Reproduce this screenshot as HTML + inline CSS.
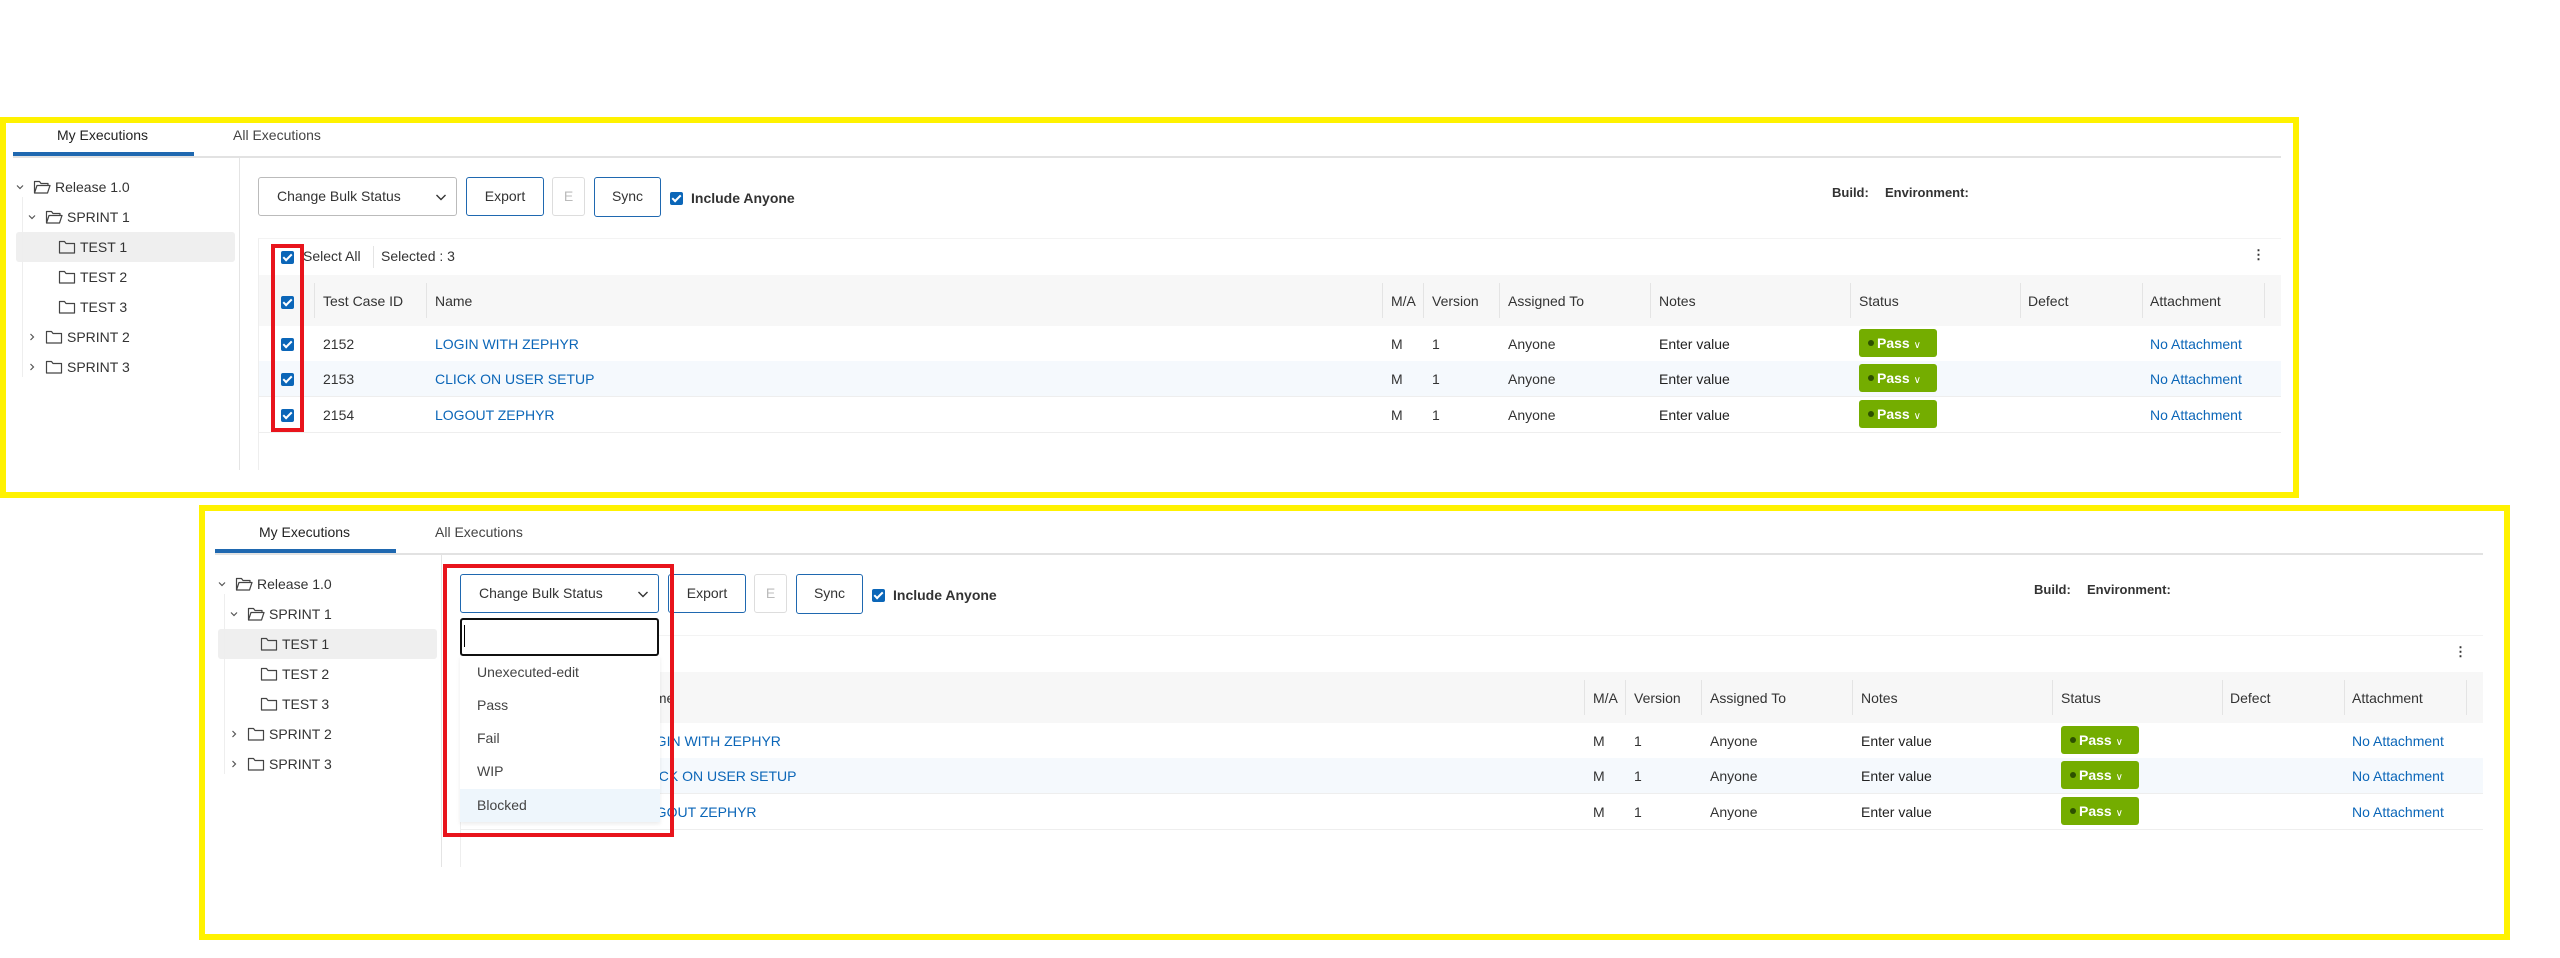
<!DOCTYPE html>
<html><head><meta charset="utf-8">
<style>
*{margin:0;padding:0;box-sizing:border-box}
body{width:2560px;height:958px;background:#fff;position:relative;overflow:hidden;font-family:"Liberation Sans",sans-serif;font-size:14px;color:#333}
.a{position:absolute;white-space:nowrap}
.yb{position:absolute;border:6px solid #fff200}
.rb{position:absolute;border:4px solid #e8141c}
.cb{position:absolute;width:13px;height:13px;background:#0b66b8;border-radius:2px}
.cb:after{content:"";position:absolute;left:4px;top:1px;width:3px;height:7px;border:solid #fff;border-width:0 2px 2px 0;transform:rotate(45deg)}
.btn{position:absolute;border:1px solid #1f68b0;border-radius:3px;background:#fff;text-align:center;line-height:37px;color:#333}
.link{color:#0b66b8}
.pass{position:absolute;width:78px;height:28px;background:#74ad00;border-radius:3px;color:#fff;font-weight:bold;font-size:14px;line-height:28px;padding-left:18px}
.pass:before{content:"";position:absolute;left:9px;top:11px;width:6px;height:6px;border-radius:3px;background:#2d5000}
.sep{position:absolute;width:1px;background:#e4e4e4}
.dd div{position:absolute;left:0;width:200px;height:33px;line-height:33px;padding-left:17px;color:#444}
</style></head><body>
<div id="root"></div>
<script>
function folder(x,y,open){
 return '<svg class="a" style="left:'+x+'px;top:'+y+'px" width="18" height="16" viewBox="0 0 18 16"><path d="'+(open?'M1.5 14V2.5h5l1.5 2h7v2.5M1.5 14l2.5-7.5h13l-2.5 7.5z':'M1.5 14V2.5h5l1.5 2h8.5V14z')+'" fill="none" stroke="#444" stroke-width="1.2" stroke-linejoin="round"/></svg>';
}
function chev(x,y,down){
 return '<svg class="a" style="left:'+x+'px;top:'+y+'px" width="10" height="10" viewBox="0 0 10 10"><path d="'+(down?'M2 3.5l3 3 3-3':'M3.5 2l3 3-3 3')+'" fill="none" stroke="#555" stroke-width="1.2"/></svg>';
}
function panel(ox,oy,rx,focus){
 var h='';
 function A(x,y,s,st){h+='<div class="a" style="left:'+(x+ox)+'px;top:'+(y+oy)+'px;'+(st||'')+'">'+s+'</div>';}
 function R(x,y,s,st){h+='<div class="a" style="left:'+(x+rx)+'px;top:'+(y+oy)+'px;'+(st||'')+'">'+s+'</div>';}
 A(57,127,'My Executions','color:#222');
 A(233,127,'All Executions','color:#444');
 h+='<div class="a" style="left:'+(ox+13)+'px;top:'+(oy+156)+'px;width:'+(rx-ox+2268)+'px;height:2px;background:#e2e2e2"></div>';
 A(13,152,'','width:181px;height:4px;background:#1f68b0');
 h+='<div class="sep" style="left:'+(ox+239)+'px;top:'+(oy+158)+'px;height:312px"></div>';
 A(16,232,'','width:219px;height:30px;background:#efefef;border-radius:3px');
 h+='<div class="sep" style="left:'+(ox+22)+'px;top:'+(oy+197)+'px;height:180px;background:#eee"></div>';
 h+=chev(ox+15,oy+182,1)+folder(ox+33,oy+179,1);A(55,179,'Release 1.0');
 h+=chev(ox+27,oy+212,1)+folder(ox+45,oy+209,1);A(67,209,'SPRINT 1');
 h+=folder(ox+58,oy+239,0);A(80,239,'TEST 1');
 h+=folder(ox+58,oy+269,0);A(80,269,'TEST 2');
 h+=folder(ox+58,oy+299,0);A(80,299,'TEST 3');
 h+=chev(ox+27,oy+332,0)+folder(ox+45,oy+329,0);A(67,329,'SPRINT 2');
 h+=chev(ox+27,oy+362,0)+folder(ox+45,oy+359,0);A(67,359,'SPRINT 3');
 h+='<div class="btn" style="left:'+(ox+258)+'px;top:'+(oy+177)+'px;width:199px;height:39px;border-color:'+(focus?'#1f68b0':'#bbb')+';text-align:left;padding-left:18px">Change Bulk Status</div>';
 h+='<svg class="a" style="left:'+(ox+435)+'px;top:'+(oy+192)+'px" width="12" height="10" viewBox="0 0 12 10"><path d="M1.5 3l4.5 4.5L10.5 3" fill="none" stroke="#333" stroke-width="1.4"/></svg>';
 h+='<div class="btn" style="left:'+(ox+466)+'px;top:'+(oy+177)+'px;width:78px;height:39px">Export</div>';
 h+='<div class="btn" style="left:'+(ox+552)+'px;top:'+(oy+177)+'px;width:33px;height:39px;border-color:#ddd;color:#bbb">E</div>';
 h+='<div class="btn" style="left:'+(ox+594)+'px;top:'+(oy+177)+'px;width:67px;height:40px">Sync</div>';
 h+='<div class="cb" style="left:'+(ox+670)+'px;top:'+(oy+192)+'px"></div>';
 A(691,190,'Include Anyone','font-weight:bold;color:#333');
 R(1832,185,'Build:','font-weight:bold;font-size:13px');
 R(1885,185,'Environment:','font-weight:bold;font-size:13px');
 h+='<div class="a" style="left:'+(ox+258)+'px;top:'+(oy+238)+'px;width:'+(rx-ox+2023)+'px;height:232px;border-left:1px solid #eee;border-top:1px solid #f3f3f3"></div>';
 h+='<div class="cb" style="left:'+(ox+281)+'px;top:'+(oy+251)+'px"></div>';
 A(303,248,'Select All');
 h+='<div class="sep" style="left:'+(ox+373)+'px;top:'+(oy+246)+'px;height:22px"></div>';
 A(381,248,'Selected : 3');
 R(2252,247,'&#8942;','font-weight:bold;font-size:13px');
 h+='<div class="a" style="left:'+(ox+259)+'px;top:'+(oy+275)+'px;width:'+(rx-ox+2022)+'px;height:51px;background:#f7f7f7"></div>';
 h+='<div class="cb" style="left:'+(ox+281)+'px;top:'+(oy+296)+'px"></div>';
 [314,426].forEach(function(x){h+='<div class="sep" style="left:'+(ox+x)+'px;top:'+(oy+283)+'px;height:35px"></div>';});
 [1382,1423,1499,1650,1850,2020,2142,2264].forEach(function(x){h+='<div class="sep" style="left:'+(rx+x)+'px;top:'+(oy+283)+'px;height:35px"></div>';});
 A(323,293,'Test Case ID');A(435,293,'Name');
 R(1391,293,'M/A');R(1432,293,'Version');R(1508,293,'Assigned To');R(1659,293,'Notes');R(1859,293,'Status');R(2028,293,'Defect');R(2150,293,'Attachment');
 var rows=[['2152','LOGIN WITH ZEPHYR',326],['2153','CLICK ON USER SETUP',361],['2154','LOGOUT ZEPHYR',397]];
 rows.forEach(function(r,i){
  var y=r[2];
  h+='<div class="a" style="left:'+(ox+259)+'px;top:'+(oy+y)+'px;width:'+(rx-ox+2022)+'px;height:36px;border-bottom:1px solid #eee;background:'+(i==1?'#f5f9fd':'#fff')+'"></div>';
  h+='<div class="cb" style="left:'+(ox+281)+'px;top:'+(oy+y+12)+'px"></div>';
  A(323,y+10,r[0]);A(435,y+10,'<span class="link">'+r[1]+'</span>');
  R(1391,y+10,'M');R(1432,y+10,'1');R(1508,y+10,'Anyone');R(1659,y+10,'Enter value','color:#222');
  h+='<div class="pass" style="left:'+(rx+1859)+'px;top:'+(oy+y+3)+'px">Pass <span style="font-weight:normal;font-size:10px">&#8744;</span></div>';
  R(2150,y+10,'<span class="link">No Attachment</span>');
 });
 return h;
}
var h='';
h+=panel(0,0,0,0);
h+=panel(202,397,202,1);
h+='<div class="yb" style="left:0;top:117px;width:2299px;height:381px"></div>';
h+='<div class="yb" style="left:199px;top:505px;width:2311px;height:435px"></div>';
h+='<div class="rb" style="left:271px;top:244px;width:33px;height:188px"></div>';
h+='<div class="a" style="left:460px;top:618px;width:199px;height:38px;border:2px solid #111;border-radius:3px;background:#fff"></div>';
h+='<div class="a" style="left:464px;top:625px;width:1px;height:22px;background:#000"></div>';
h+='<div class="a dd" style="left:460px;top:656px;width:200px;height:166px;background:#fff;box-shadow:0 2px 4px rgba(0,0,0,.08)">'+
 '<div style="top:0">Unexecuted-edit</div><div style="top:33px">Pass</div><div style="top:66px">Fail</div><div style="top:99px">WIP</div><div style="top:133px;background:#eef6fc">Blocked</div></div>';
h+='<div class="rb" style="left:443px;top:564px;width:231px;height:273px"></div>';
document.getElementById('root').innerHTML=h;
</script>
</body></html>
